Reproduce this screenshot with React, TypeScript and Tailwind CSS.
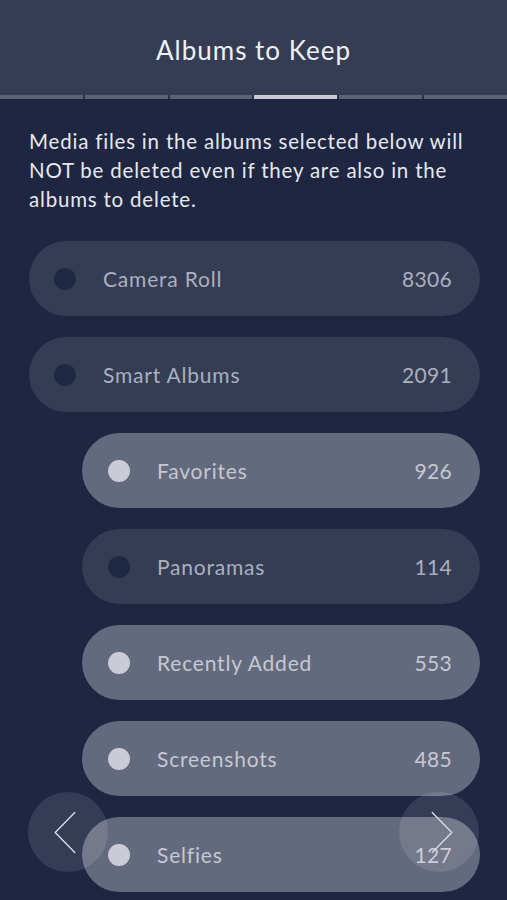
type Album = { name: string; count: number; selected: boolean; nested: boolean };

const albums: Album[] = [
  { name: "Camera Roll", count: 8306, selected: false, nested: false },
  { name: "Smart Albums", count: 2091, selected: false, nested: false },
  { name: "Favorites", count: 926, selected: true, nested: true },
  { name: "Panoramas", count: 114, selected: false, nested: true },
  { name: "Recently Added", count: 553, selected: true, nested: true },
  { name: "Screenshots", count: 485, selected: true, nested: true },
  { name: "Selfies", count: 127, selected: true, nested: true },
];

function Chevron({ dir }: { dir: "left" | "right" }) {
  return (
    <svg
      aria-hidden="true"
      viewBox="0 0 24 44"
      className="h-[43px] w-[24px] text-[#d9dce4]"
      fill="none"
      stroke="currentColor"
      strokeWidth="1.4"
    >
      <polyline
        points={dir === "left" ? "22,1.5 2,22 22,42.5" : "2,1.5 22,22 2,42.5"}
        strokeLinecap="round"
        strokeLinejoin="round"
      />
    </svg>
  );
}

function AlbumRow({ album }: { album: Album }) {
  const text = album.selected ? "text-[#c4c8d2]" : "text-[#aab0bf]";
  return (
    <div
      className={`flex h-[75px] items-center rounded-full pr-[28px] ${
        album.nested ? "ml-[53px] pl-[26px]" : "pl-[25px]"
      } ${album.selected ? "bg-[#646a7e]" : "bg-[#353d55]"}`}
    >
      <span
        className={`h-[22px] w-[22px] flex-shrink-0 rounded-full ${
          album.selected ? "bg-[#c9ccd5]" : "bg-[#1f2843]"
        }`}
      />
      <span className={`ml-[27px] flex-1 text-[21px] tracking-[0.8px] ${text}`}>
        {album.name}
      </span>
      <span className={`text-[21px] tracking-[0.3px] ${text}`}>{album.count}</span>
    </div>
  );
}

export default function App() {
  return (
    <div
      className="relative h-[900px] w-[507px] overflow-hidden bg-[#1e2642]"
      style={{ fontFamily: "Lato, 'Noto Sans', sans-serif" }}
    >
      <header className="bg-[#353d55]">
        <h1 className="flex h-[95px] items-center justify-center pt-[5px] text-[26px] tracking-[1px] text-[#eef0f4]">
          Albums to Keep
        </h1>
        <div className="flex h-[4px] gap-[2px] bg-[#2a3149]">
          {[0, 1, 2, 3, 4, 5].map((i) => (
            <div
              key={i}
              className={`flex-1 ${i === 3 ? "bg-[#c9ccd6]" : "bg-[#5b6376]"}`}
            />
          ))}
        </div>
      </header>

      <p className="whitespace-nowrap px-[29px] pt-[28px] text-[20.5px] leading-[29px] tracking-[0.8px] text-[#e6e8ee]">
        Media files in the albums selected below will
        <br />
        NOT be deleted even if they are also in the
        <br />
        albums to delete.
      </p>

      <div className="mt-[27px] flex flex-col gap-[21px] pl-[29px] pr-[27px]">
        {albums.map((a) => (
          <AlbumRow key={a.name} album={a} />
        ))}
      </div>

      <button className="absolute left-[28px] top-[792px] flex h-[80px] w-[80px] items-center justify-center rounded-full bg-white/10 pr-[6px]">
        <Chevron dir="left" />
      </button>
      <button className="absolute left-[399px] top-[792px] flex h-[80px] w-[80px] items-center justify-center rounded-full bg-white/10 pl-[6px]">
        <Chevron dir="right" />
      </button>
    </div>
  );
}
